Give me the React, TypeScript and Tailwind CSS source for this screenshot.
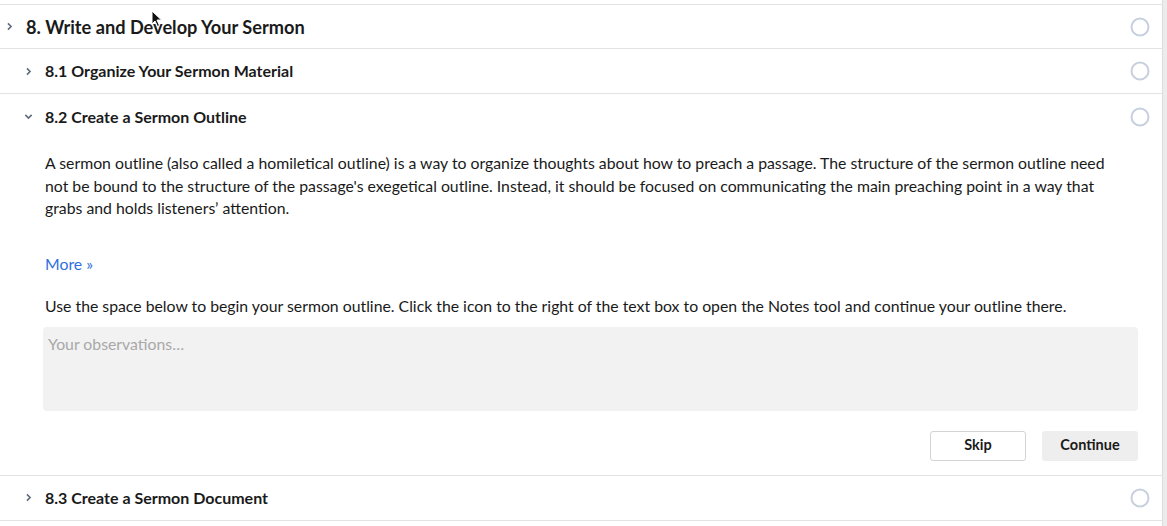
import React from "react";

const Chevron = ({ down = false }: { down?: boolean }) => (
  <svg width="9" height="9" viewBox="0 0 8 8" className="shrink-0">
    {down ? (
      <path d="M1.2 2.6 L4 5.4 L6.8 2.6" fill="none" stroke="#5f6b7d" strokeWidth="1.4" />
    ) : (
      <path d="M2.6 1.2 L5.4 4 L2.6 6.8" fill="none" stroke="#5f6b7d" strokeWidth="1.4" />
    )}
  </svg>
);

const Circle = () => (
  <svg width="22" height="22" viewBox="0 0 22 22" className="shrink-0">
    <circle cx="11" cy="11" r="8.5" fill="none" stroke="#c7d0de" strokeWidth="2" />
  </svg>
);

export default function App() {
  return (
    <div
      className="w-[1167px] h-[526px] bg-white flex overflow-hidden relative text-[#1a1a1a]"
      style={{ fontFamily: "Lato, 'Noto Sans', sans-serif" }}
    >
      <div className="w-[1163px] border-r border-[#dcdcdc] pt-[4px] flex flex-col">
        <div className="border-t border-[#e3e3e3] h-[45px] flex items-center pl-[5px] pr-[11px] border-b">
          <Chevron />
          <div className="ml-[12px] pt-[2px] text-[18.2px] font-bold flex-1">8. Write and Develop Your Sermon</div>
          <Circle />
        </div>
        <div className="h-[45px] flex items-center pl-[24px] pr-[11px] border-b border-[#e3e3e3]">
          <Chevron />
          <div className="ml-[12px] text-[16px] font-bold flex-1">8.1 Organize Your Sermon Material</div>
          <Circle />
        </div>
        <div className="flex flex-col border-b border-[#e3e3e3] pb-[14px]">
          <div className="h-[45px] flex items-center pl-[24px] pr-[11px]">
            <Chevron down />
            <div className="ml-[12px] text-[16px] font-bold flex-1">8.2 Create a Sermon Outline</div>
            <Circle />
          </div>
          <div className="pl-[45px] pr-[24px] text-[15.8px] leading-[22.5px] pt-[13px]">
            <p className="pr-[30px]">
              A sermon outline (also called a homiletical outline) is a way to organize thoughts about how to preach a passage. The structure of the sermon outline need not be bound to the structure of the passage's exegetical outline. Instead, it should be focused on communicating the main preaching point in a way that grabs and holds listeners’ attention.
            </p>
            <div className="mt-[33px] text-[#2f6fe0]">More »</div>
            <div className="mt-[20px]">
              Use the space below to begin your sermon outline. Click the icon to the right of the text box to open the Notes tool and continue your outline there.
            </div>
            <div className="mt-[9px] -ml-[2px] h-[84px] bg-[#f2f2f2] rounded-[4px] px-[5px] pt-[6px] text-[#a8a8a8]">
              Your observations…
            </div>
            <div className="mt-[20px] flex justify-end gap-[16px]">
              <button className="w-[96px] h-[30px] border border-[#d4d4d4] rounded-[3px] bg-white text-[14.5px] font-bold">
                Skip
              </button>
              <button className="w-[96px] h-[30px] rounded-[3px] bg-[#eeeeee] text-[14.5px] font-bold">
                Continue
              </button>
            </div>
          </div>
        </div>
        <div className="h-[45px] flex items-center pl-[24px] pr-[11px] border-b border-[#e3e3e3]">
          <Chevron />
          <div className="ml-[12px] text-[16px] font-bold flex-1">8.3 Create a Sermon Document</div>
          <Circle />
        </div>
      </div>
      <div className="flex-1 bg-[#ececec]" />
      <svg className="absolute left-[151px] top-[10px]" width="12" height="18" viewBox="0 0 12 18">
        <path d="M1 1 L1 14 L4 11 L6.5 16.5 L8.5 15.5 L6 10 L10.5 10 Z" fill="#111" stroke="#fff" strokeWidth="1" />
      </svg>
    </div>
  );
}
